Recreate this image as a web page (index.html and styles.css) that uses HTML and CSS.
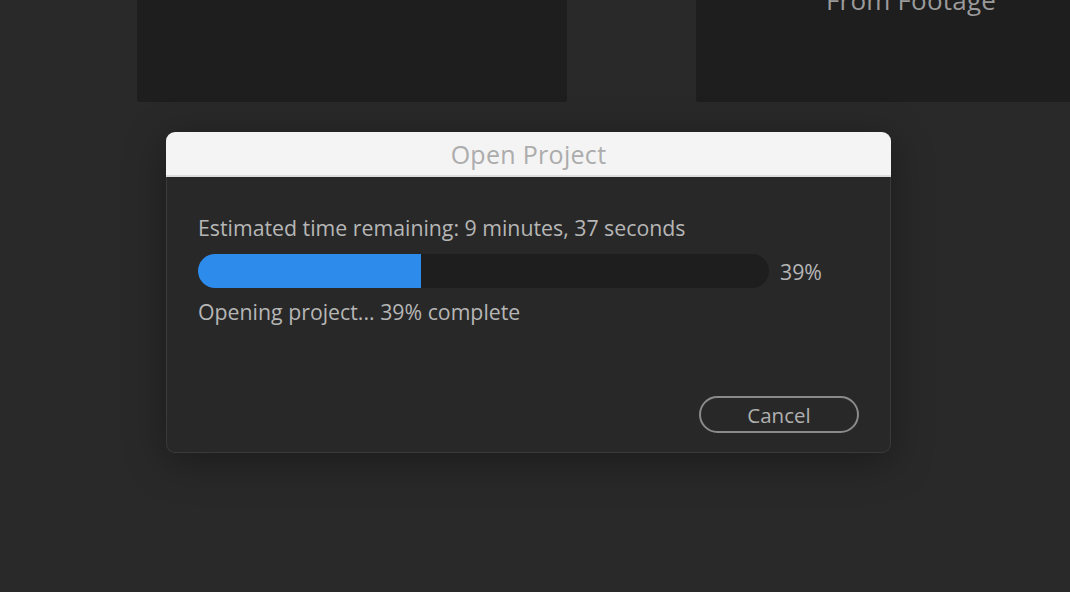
FILE: index.html
```html
<!DOCTYPE html>
<html>
<head>
<meta charset="utf-8">
<link rel="stylesheet" href="styles.css">
</head>
<body>
<div class="page">
  <div class="cards">
    <div class="card"></div>
    <div class="card"><div class="card-label">From Footage</div></div>
  </div>
  <div class="dialog">
    <div class="title">Open Project</div>
    <div class="body">
      <div class="line">Estimated time remaining: 9 minutes, 37 seconds</div>
      <div class="progress-row">
        <div class="track"><div class="fill" style="width:39%"></div></div>
        <div class="pct">39%</div>
      </div>
      <div class="line">Opening project... 39% complete</div>
      <div class="actions"><button class="btn">Cancel</button></div>
    </div>
  </div>
</div>
</body>
</html>
```
FILE: styles.css
```css
html, body {
  margin: 0;
  padding: 0;
  background: #292929;
  width: 1070px;
  height: 592px;
  overflow: hidden;
  font-family: "Open Sans", "Noto Sans", sans-serif;
}
.page {
  display: flex;
  flex-direction: column;
}
.cards {
  display: flex;
  gap: 129px;
  padding-left: 137px;
}
.card {
  flex: 0 0 430px;
  height: 102px;
  background: #1e1e1e;
  border-radius: 0 0 3px 3px;
  overflow: hidden;
  display: flex;
  justify-content: center;
}
.card-label {
  color: #9a9a9a;
  font-size: 26px;
  line-height: 30px;
  margin-top: -15px;
  letter-spacing: 0.2px;
}
.dialog {
  margin: 30px 0 0 166px;
  width: 725px;
  border-radius: 9px;
  box-shadow: 0 8px 40px rgba(0,0,0,0.35);
}
.title {
  height: 43px;
  background: #f4f4f4;
  border-radius: 9px 9px 0 0;
  border-bottom: 2px solid #dcdcdc;
  color: #acacac;
  font-size: 25px;
  line-height: 45px;
  text-align: center;
  letter-spacing: 0.3px;
}
.body {
  height: 276px;
  background: #282828;
  border: 1px solid #3a3a3a;
  border-top: none;
  border-radius: 0 0 9px 9px;
  padding: 37px 31px 0 31px;
  box-sizing: border-box;
  display: flex;
  flex-direction: column;
}
.line {
  color: #b6b6b6;
  font-size: 21.3px;
  line-height: 28px;
}
.progress-row {
  display: flex;
  align-items: center;
  gap: 11px;
  margin: 12px 0 10px;
}
.track {
  width: 571px;
  height: 34px;
  border-radius: 17px;
  background: #1e1e1e;
  overflow: hidden;
}
.fill {
  height: 100%;
  background: #2d8ceb;
}
.pct {
  color: #b6b6b6;
  font-size: 21.3px;
}
.actions {
  display: flex;
  justify-content: flex-end;
  margin-top: 70px;
}
.btn {
  width: 160px;
  height: 37px;
  border: 2px solid #8a8a8a;
  border-radius: 19px;
  background: transparent;
  color: #b0b0b0;
  font-family: inherit;
  font-size: 20.5px;
  line-height: 30px;
  padding: 0;
}
```
